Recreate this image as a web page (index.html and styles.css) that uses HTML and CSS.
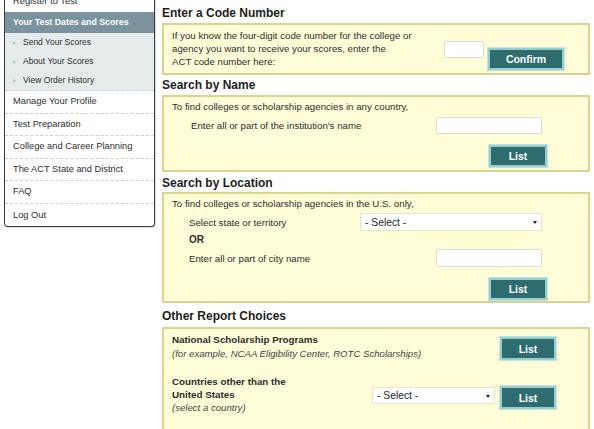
FILE: index.html
```html
<!DOCTYPE html>
<html lang="en">
<head>
<meta charset="utf-8">
<title>Send Your Scores</title>
<link rel="stylesheet" href="styles.css">
</head>
<body>
<div class="page">
  <nav class="sidebar">
    <ul class="nav">
      <li class="nav-item">Register to Test</li>
      <li class="nav-head">Your Test Dates and Scores</li>
      <li class="nav-sub">
        <ul>
          <li><span class="tri"></span>Send Your Scores</li>
          <li><span class="tri"></span>About Your Scores</li>
          <li><span class="tri"></span>View Order History</li>
        </ul>
      </li>
      <li class="nav-item">Manage Your Profile</li>
      <li class="nav-item">Test Preparation</li>
      <li class="nav-item">College and Career Planning</li>
      <li class="nav-item">The ACT State and District</li>
      <li class="nav-item">FAQ</li>
      <li class="nav-item last">Log Out</li>
    </ul>
  </nav>

  <main class="main">
    <h2 class="sec-title first">Enter a Code Number</h2>
    <div class="box box-code">
      <p class="code-text">If you know the four-digit code number for the college or<br>agency you want to receive your scores, enter the<br>ACT code number here:</p>
      <input class="field field-code" type="text">
      <button class="btn btn-confirm" type="button">Confirm</button>
    </div>

    <h2 class="sec-title">Search by Name</h2>
    <div class="box box-name">
      <p class="lead">To find colleges or scholarship agencies in any country,</p>
      <div class="row row-name">
        <span class="label label-name">Enter all or part of the institution's name</span>
        <input class="field field-wide" type="text">
      </div>
      <div class="btn-row">
        <button class="btn btn-list" type="button">List</button>
      </div>
    </div>

    <h2 class="sec-title mid-title">Search by Location</h2>
    <div class="box box-loc">
      <p class="lead">To find colleges or scholarship agencies in the U.S. only,</p>
      <div class="row row-state">
        <span class="label label-loc">Select state or territory</span>
        <span class="select select-state"><span class="select-val">- Select -</span></span>
      </div>
      <div class="or">OR</div>
      <div class="row row-city">
        <span class="label label-loc">Enter all or part of city name</span>
        <input class="field field-wide" type="text">
      </div>
      <div class="btn-row">
        <button class="btn btn-list" type="button">List</button>
      </div>
    </div>

    <h2 class="sec-title last-title">Other Report Choices</h2>
    <div class="box box-other">
      <div class="other-row row-nat">
        <div class="other-text">
          <strong>National Scholarship Programs</strong>
          <em>(for example, NCAA Eligibility Center, ROTC Scholarships)</em>
        </div>
        <button class="btn btn-list2" type="button">List</button>
      </div>
      <div class="other-row row-country">
        <div class="other-text">
          <strong>Countries other than the<br>United States</strong>
          <em>(select a country)</em>
        </div>
        <span class="select select-country"><span class="select-val">- Select -</span></span>
        <button class="btn btn-list2" type="button">List</button>
      </div>
    </div>
  </main>
</div>
</body>
</html>
```

FILE: styles.css
```css
html, body {
  margin: 0;
  padding: 0;
  background: #ffffff;
}

body {
  font-family: "Liberation Sans", Arial, sans-serif;
  color: #333333;
  overflow: hidden;
  height: 429px;
}

.page {
  display: flex;
  align-items: flex-start;
}

/* ---------- sidebar ---------- */
.sidebar {
  width: 149px;
  margin-left: 4px;
  margin-top: -9px;
  border: 1px solid #3a3a3a;
  border-top: none;
  border-radius: 0 0 4px 4px;
  background: #ffffff;
  box-shadow: 1px 1px 1px rgba(0, 0, 0, 0.15);
}

.nav, .nav ul {
  list-style: none;
  margin: 0;
  padding: 0;
}

.nav-item {
  font-size: 9.3px;
  line-height: 21.6px;
  padding-left: 8px;
  color: #2e2e2e;
  border-bottom: 1px dashed #cfcfcf;
}

.nav-item.last {
  border-bottom: none;
  line-height: 22px;
}

.nav > .nav-item:first-child {
  line-height: 21px;
  border-bottom: none;
}

.nav-head {
  background: #7b939f;
  color: #ffffff;
  font-weight: bold;
  font-size: 8.8px;
  line-height: 21px;
  padding-left: 8px;
}

.nav-sub {
  background: #e6ecec;
  border-bottom: 1px dashed #cfcfcf;
}

.nav-sub li {
  display: flex;
  align-items: center;
  font-size: 8.5px;
  line-height: 19px;
  padding-left: 8px;
  color: #2e2e2e;
}

.tri {
  width: 0;
  height: 0;
  border-top: 2.5px solid transparent;
  border-bottom: 2.5px solid transparent;
  border-left: 3px solid #b9bfbf;
  margin-right: 7px;
}

/* ---------- main ---------- */
.main {
  width: 428px;
  margin-left: 7px;
  padding-top: 4px;
}

.sec-title {
  margin: 1px 0 1px 0;
  font-size: 12px;
  line-height: 18px;
  font-weight: bold;
  color: #1e1e1e;
}

.sec-title.first {
  margin-top: 0;
}

.sec-title.mid-title {
  margin-top: 2px;
  margin-bottom: 0;
}

.sec-title.last-title {
  margin-top: 4px;
  margin-bottom: 2px;
}

.box {
  background: #fffcd8;
  border: 2px solid #d9d58f;
  box-sizing: border-box;
  font-size: 9.7px;
  color: #2e2e2e;
}

p {
  margin: 0;
}

/* code box */
.box-code {
  height: 52px;
  display: flex;
  align-items: flex-start;
  padding: 4px 0 0 8px;
}

.code-text {
  width: 272px;
  line-height: 13px;
}

.field {
  box-sizing: border-box;
  background: #ffffff;
  border: 1px solid #dcdcd0;
  border-radius: 2px;
  padding: 0;
  margin: 0;
  font: inherit;
}

.field-code {
  width: 40px;
  height: 17px;
  margin-top: 12px;
}

.btn {
  box-sizing: border-box;
  background: #2f6c70;
  color: #ffffff;
  font-family: "Liberation Sans", Arial, sans-serif;
  font-weight: bold;
  font-size: 10.5px;
  border: 2px solid #95d0cf;
  outline: 1px solid #c4e3df;
  padding: 0;
  margin: 0;
  cursor: pointer;
}

.btn-confirm {
  width: 76px;
  height: 22px;
  margin-left: 4px;
  margin-top: 19px;
}

/* name box */
.box-name {
  height: 77px;
  padding: 3px 0 0 8px;
}

.lead {
  line-height: 13px;
}

.row {
  display: flex;
  align-items: center;
}

.row-name {
  margin-top: 4px;
  height: 17px;
}

.label-name {
  width: 245px;
  padding-left: 19px;
  box-sizing: border-box;
}

.field-wide {
  width: 106px;
  height: 17px;
  margin-left: 19px;
}

.label-loc {
  width: 188px;
  padding-left: 17px;
  box-sizing: border-box;
}

.btn-row {
  display: flex;
  padding-left: 317px;
}

.box-name .btn-row {
  margin-top: 11px;
}

.btn-list {
  width: 58px;
  height: 22px;
}

/* location box */
.box-loc {
  height: 111px;
  padding: 3px 0 0 8px;
}

.row-state {
  margin-top: 3px;
  height: 18px;
}

.select {
  position: relative;
  box-sizing: border-box;
  display: flex;
  align-items: center;
  background: #ffffff;
  border: 1px solid #e6e4cc;
  font-size: 10.3px;
  color: #1e1e1e;
  padding-left: 4px;
}

.select::after {
  content: "";
  position: absolute;
  right: 4px;
  top: 50%;
  margin-top: -1px;
  border-left: 2.5px solid transparent;
  border-right: 2.5px solid transparent;
  border-top: 3px solid #222222;
}

.select-state {
  width: 182px;
  height: 18px;
}

.or {
  font-weight: bold;
  font-size: 10px;
  padding-left: 17px;
  line-height: 17px;
}

.row-city {
  margin-top: 1px;
  height: 18px;
}

.row-city .field-wide {
  margin-left: 76px;
  height: 18px;
}

.box-loc .btn-row {
  margin-top: 11px;
}

/* other box */
.box-other {
  height: 110px;
  padding: 5px 0 0 8px;
}

.other-row {
  display: flex;
  align-items: flex-start;
}

.other-text {
  line-height: 13px;
}

.other-text strong {
  display: block;
  font-size: 9.8px;
  line-height: 12.5px;
  color: #2e2e2e;
}

.other-text em {
  display: block;
  font-size: 9.6px;
  color: #444444;
}

.row-nat .other-text {
  width: 328px;
}

.row-nat .btn-list2 {
  margin-top: 3px;
}

.row-country {
  margin-top: 16px;
}

.row-country .other-text {
  width: 200px;
}

.select-country {
  width: 123px;
  height: 17px;
  margin-top: 11px;
}

.btn-list2 {
  width: 56px;
  height: 23px;
}

.row-country .btn-list2 {
  margin-left: 5px;
  margin-top: 10px;
}
```
